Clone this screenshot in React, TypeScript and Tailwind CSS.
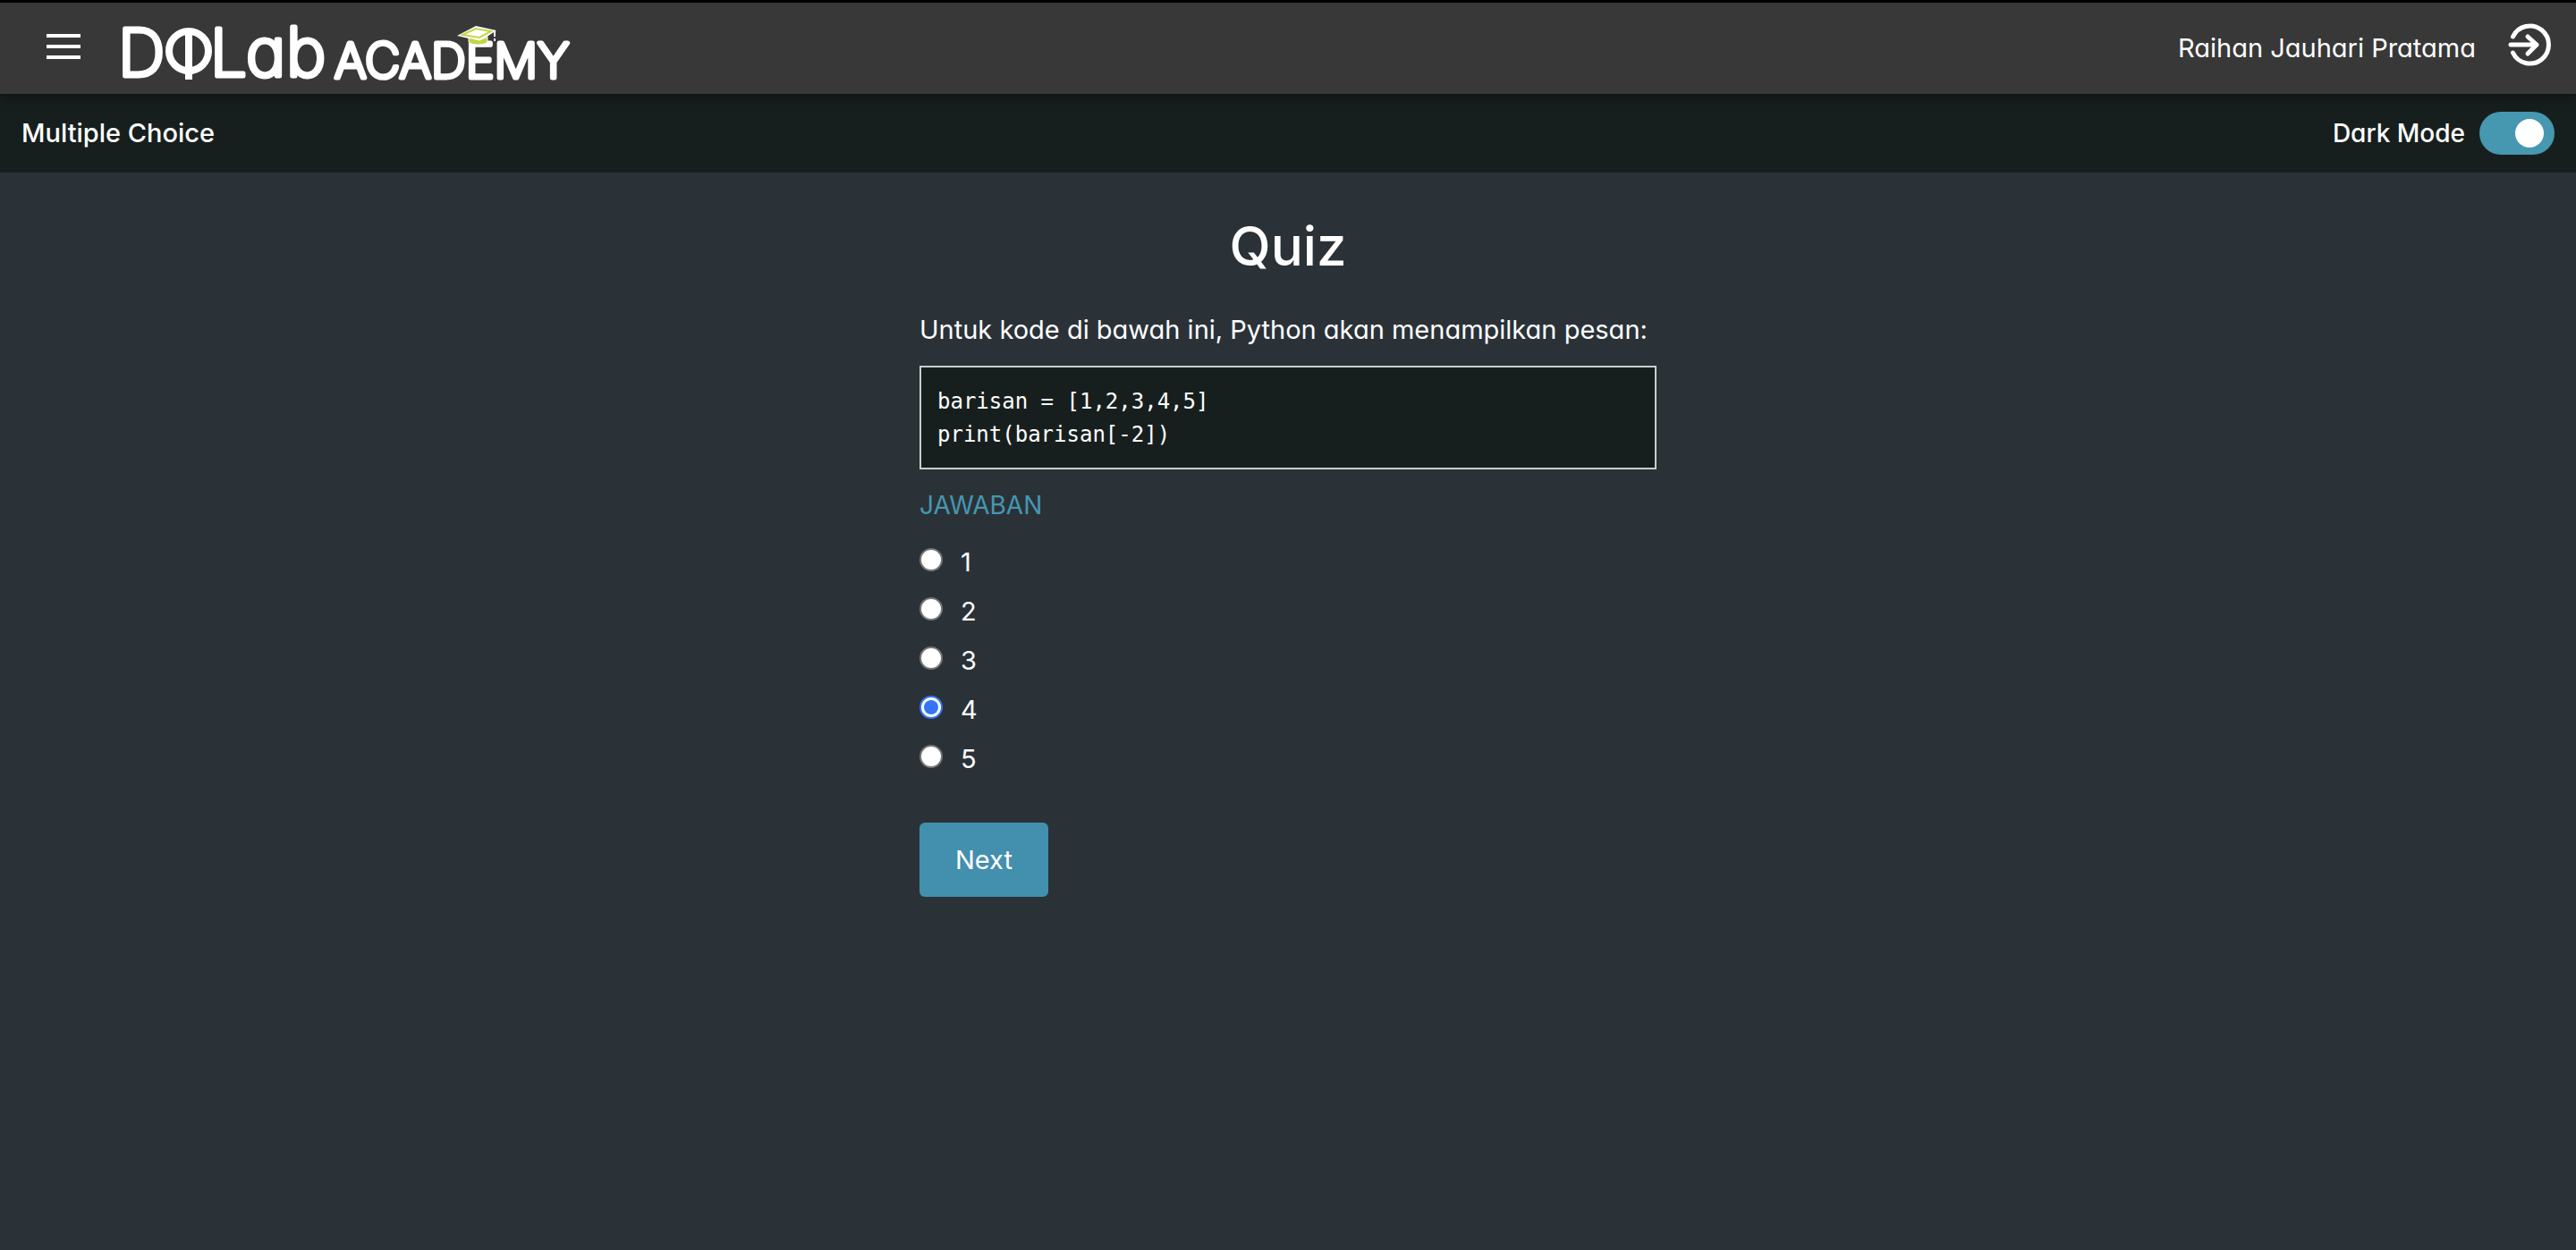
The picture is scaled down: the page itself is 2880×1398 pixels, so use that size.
import { useState } from "react";

function Logo() {
  return (
    <svg viewBox="0 0 512 76" className="h-[76px] w-[512px] overflow-visible" role="img" aria-label="DQLab Academy">
      <g
        fill="#fff"
        stroke="#fff"
        strokeLinejoin="round"
        strokeLinecap="round"
        fontFamily="Inter, sans-serif"
        fontWeight="200"
        style={{ fontFeatureSettings: '"cv11"' }}
      >
        <text x="-2" y="69" fontSize="73" strokeWidth="5">D</text>
        <text x="101" y="69" fontSize="73" strokeWidth="5">L</text>
        <text x="141" y="69" fontSize="75" strokeWidth="5">a</text>
        <text x="186" y="69" fontSize="75" strokeWidth="5">b</text>
        <text x="240" y="71" fontSize="54" strokeWidth="5">ACADEMY</text>
      </g>
      <g fill="none" stroke="#fff" strokeWidth="8">
        <circle cx="77" cy="41" r="22" />
        <path d="M77 20V73" />
      </g>
      <path d="M377 24 398 13 421 18 403 30Z" fill="#fff" />
      <path d="M390 26 402 29 411 25V31C408 35 393 35 390 31Z" fill="#c4d645" stroke="#fff" strokeWidth="1" />
      <path d="M383 23 398 16 415 19 402 26Z" fill="#fff" stroke="#c4d645" strokeWidth="2" />
      <path d="M419 19V25M419 27V30" stroke="#fff" strokeWidth="2" />
    </svg>
  );
}

const options = ["1", "2", "3", "4", "5"];

export default function App() {
  const [answer, setAnswer] = useState("4");
  const [dark, setDark] = useState(true);

  return (
    <div className="flex min-h-screen flex-col border-t-3 border-black bg-[#2a3238] font-['Inter',sans-serif] text-[29px] leading-10 text-white [font-feature-settings:'cv11']">
      <header className="z-10 flex h-[102px] items-center justify-between bg-[#383838] pr-7 pl-13 shadow-[0_4px_12px_rgba(0,0,0,0.4)]">
        <div className="flex items-center gap-11">
          <button aria-label="Menu" className="flex w-[38px] flex-col gap-2 pb-1">
            <span className="h-1 w-full bg-white" />
            <span className="h-1 w-full bg-white" />
            <span className="h-1 w-full bg-white" />
          </button>
          <a href="#">
            <Logo />
          </a>
        </div>
        <div className="flex items-center gap-9">
          <span>Raihan Jauhari Pratama</span>
          <button aria-label="Log out" className="pb-2">
            <svg viewBox="0 0 48 48" className="size-12" fill="none" stroke="#fff" strokeWidth="5" strokeLinecap="round" strokeLinejoin="round">
              <path d="M5.500 15A21 21 0 1 1 5.500 33" />
              <path d="M3 24H32M22 15 32 24 22 34" />
            </svg>
          </button>
        </div>
      </header>

      <div className="flex h-22 items-center justify-between bg-[#171f1e] px-6 font-medium">
        <span>Multiple Choice</span>
        <label className="flex cursor-pointer items-center gap-4 text-[28px]">
          Dark Mode
          <input
            type="checkbox"
            role="switch"
            checked={dark}
            onChange={(e) => setDark(e.target.checked)}
            className="h-12 w-21 cursor-pointer appearance-none rounded-full bg-gray-500 px-3 py-2 before:block before:size-8 before:rounded-full before:bg-white checked:bg-[#4697b0] checked:before:ml-7"
          />
        </label>
      </div>

      <main className="mx-auto w-full max-w-[824px] pt-12">
        <h1 className="text-center text-[60px] leading-17 font-medium">Quiz</h1>
        <p className="mt-10 whitespace-nowrap">Untuk kode di bawah ini, Python akan menampilkan pesan:</p>
        <pre className="mt-5 border-2 border-[#ccc] bg-[#171f1e] px-[18px] pt-5 pb-[18px] font-['DejaVu_Sans_Mono',monospace] text-2xl leading-[37px]">
          {"barisan = [1,2,3,4,5]\nprint(barisan[-2])"}
        </pre>
        <fieldset>
          <legend className="pt-5 text-[28px] leading-10 text-[#4697b0]">JAWABAN</legend>
          <div className="mt-6 flex flex-col gap-[15px]">
            {options.map((o) => (
              <label key={o} className="flex items-start gap-5">
                <input
                  type="radio"
                  name="answer"
                  value={o}
                  checked={answer === o}
                  onChange={() => setAnswer(o)}
                  className="mt-1 grid size-[26px] appearance-none place-items-center rounded-full border-2 border-[#767676] bg-white checked:border-[#3375f6] checked:before:size-4 checked:before:rounded-full checked:before:bg-[#3375f6]"
                />
                {o}
              </label>
            ))}
          </div>
        </fieldset>
        <button className="mt-[51px] h-[83px] rounded-md bg-[#438fae] px-10">Next</button>
      </main>
    </div>
  );
}
